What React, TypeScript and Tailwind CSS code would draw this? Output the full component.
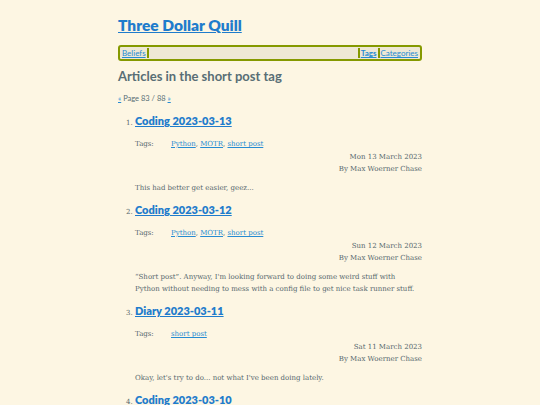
import React from "react";

interface Post {
  title: string;
  tags: string[];
  date: string;
  body: string;
}

const posts: Post[] = [
  {
    title: "Coding 2023-03-13",
    tags: ["Python", "MOTR", "short post"],
    date: "Mon 13 March 2023",
    body: "This had better get easier, geez...",
  },
  {
    title: "Coding 2023-03-12",
    tags: ["Python", "MOTR", "short post"],
    date: "Sun 12 March 2023",
    body: "\u201cShort post\u201d. Anyway, I'm looking forward to doing some weird stuff with Python without needing to mess with a config file to get nice task runner stuff.",
  },
  {
    title: "Diary 2023-03-11",
    tags: ["short post"],
    date: "Sat 11 March 2023",
    body: "Okay, let's try to do... not what I've been doing lately.",
  },
  {
    title: "Coding 2023-03-10",
    tags: ["Python", "MOTR", "short post"],
    date: "Fri 10 March 2023",
    body: "",
  },
];

const sans = "font-['Lato','Open_Sans',sans-serif]";
const serif = "font-['DejaVu_Serif','Liberation_Serif',serif]";

export default function App() {
  return (
    <div className={`h-[405px] overflow-hidden bg-[#fdf6e3] text-[#586e75] ${serif}`}>
      <div className="mx-auto w-[304px] pt-[14px]">
        {/* Site title */}
        <h1 className={`${sans} text-[15.5px] font-extrabold leading-[22px]`}>
          <a href="#" className="text-[#1f7ccc] underline">Three Dollar Quill</a>
        </h1>

        {/* Nav bar */}
        <nav className={`${sans} mt-[9px] flex h-[16px] items-center rounded-[3px] border-2 border-[#859900] bg-[#eee8d5] px-[1px] text-[8px]`}>
          <a href="#" className="px-[1px] text-[#268bd2] underline">Beliefs</a>
          <span className="h-[10px] w-[2px] bg-[#859900]" />
          <span className="flex-1" />
          <span className="h-[10px] w-[2px] bg-[#859900]" />
          <a href="#" className="px-[1px] font-bold text-[#268bd2] underline">Tags</a>
          <span className="h-[10px] w-[2px] bg-[#859900]" />
          <a href="#" className="px-[1px] text-[#268bd2] underline">Categories</a>
        </nav>

        <h2 className={`${sans} mt-[7px] text-[13px] font-bold leading-[16px]`}>
          Articles in the short post tag
        </h2>

        <p className={`${sans} mt-[10px] text-[7.5px] leading-[10px]`}>
          <a href="#" className="text-[#268bd2] underline">«</a> Page 83 / 88{" "}
          <a href="#" className="text-[#268bd2] underline">»</a>
        </p>

        <ol className="mt-[8px] list-decimal pl-[17px] text-[7px] leading-[12px] text-[#55676d] marker:text-[7px]">
          {posts.map((p) => (
            <li key={p.title} className="mb-[7px]">
              <h3 className={`${sans} text-[11px] font-extrabold leading-[17px]`}>
                <a href="#" className="text-[#1f7ccc] underline">{p.title}</a>
              </h3>
              <div className="mt-[9px] flex">
                <span className="w-[36px]">Tags:</span>
                <span>
                  {p.tags.map((t, i) => (
                    <React.Fragment key={t}>
                      <a href="#" className="text-[#268bd2] underline">{t}</a>
                      {i < p.tags.length - 1 ? ", " : ""}
                    </React.Fragment>
                  ))}
                </span>
              </div>
              <div className="mt-[1px] text-right">{p.date}</div>
              <div className="text-right">By Max Woerner Chase</div>
              {p.body && <p className="mt-[7px] pr-[6px]">{p.body}</p>}
            </li>
          ))}
        </ol>
      </div>
    </div>
  );
}
